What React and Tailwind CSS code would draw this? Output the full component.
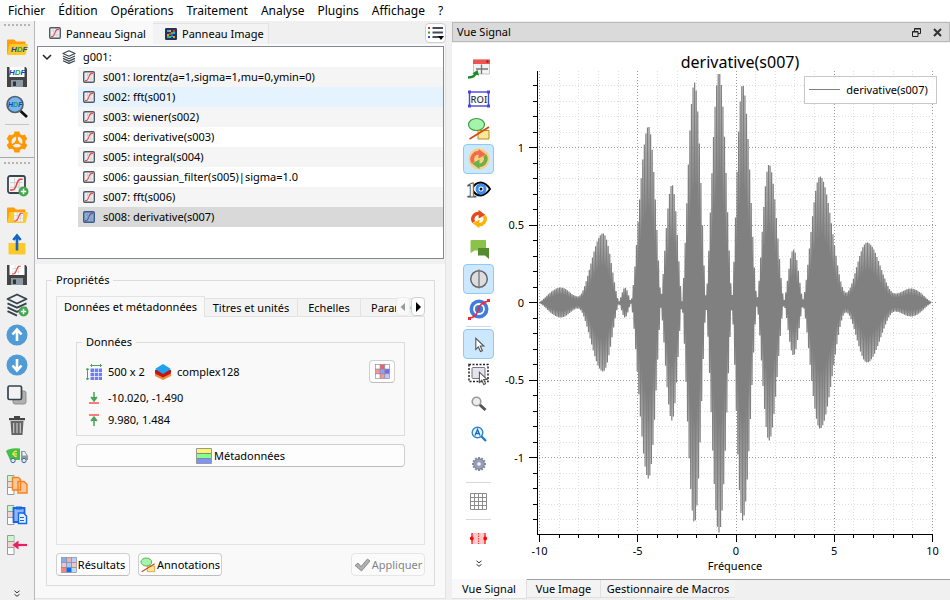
import React from "react";

/* ---------- small building blocks ---------- */

const Svg = ({ size = 24, children, box = 24, className = "" }) => (
  <svg width={size} height={size} viewBox={`0 0 ${box} ${box}`} className={`shrink-0 ${className}`} aria-hidden="true">
    {children}
  </svg>
);

const HdfText = ({ x = 5, y = 15, size = 8 }) => (
  <text x={x} y={y} fontSize={size} fontWeight="700" fontStyle="italic" fontFamily="Liberation Sans, sans-serif">
    <tspan fill="#1d3fae">H</tspan>
    <tspan fill="#18a05a">D</tspan>
    <tspan fill="#1d3fae">F</tspan>
  </text>
);

const SignalIcon = ({ size = 12, selected = false, className = "" }) => (
  <Svg size={size} box={12} className={className}>
    <rect x="0.7" y="0.7" width="10.6" height="10.6" rx="1.2" fill={selected ? "#8fb2d8" : "#eef0f2"} stroke={selected ? "#3b5a86" : "#4d5b66"} strokeWidth="1.4" />
    <path d="M4.5 1.5v9M8 1.5v9M1.5 4h9M1.5 8h9" stroke={selected ? "#7398c4" : "#c6cbd0"} strokeWidth="0.6" />
    <path d="M2 9.6h1.6C6 9.4 5.6 2.6 8.4 2.4H10" fill="none" stroke={selected ? "#7c4f86" : "#f04a4a"} strokeWidth="1.1" />
  </Svg>
);

const ImageIcon = () => (
  <Svg size={12} box={12}>
    <rect width="12" height="12" rx="1.2" fill="#22345a" />
    <path d="M2 2h2v2H2zM8 4h2v2H8zM4 8h2v2H4z" fill="#25b6e8" />
    <path d="M4 2h2v2H4zM2 6h2v2H2zM8 8h2v2H8z" fill="#f0a020" />
    <path d="M8 2h2v2H8zM4 5h2v2H4z" fill="#e03c31" />
    <path d="M6 4h2v2H6zM2 8h2v2H2zM6 8h2v1H6z" fill="#3fb54a" />
    <path d="M6 6h2v2H6z" fill="#2b64d8" />
  </Svg>
);

const Layers = ({ size = 14 }) => (
  <Svg size={size} box={14}>
    <g fill="none" stroke="#36454f" strokeWidth="1.2" strokeLinejoin="round">
      <path d="M7 .8 13 3.5 7 6.2 1 3.5z" />
      <path d="m1 6 6 2.7L13 6M1 8.4l6 2.7 6-2.7M1 10.8l6 2.6 6-2.6" />
    </g>
  </Svg>
);

const Folder = ({ children }) => (
  <Svg>
    <path d="M2 5.500q0-1 1-1h6l2 2h8.500q1 0 1 1V19H2z" fill="#ff9d0b" />
    <path d="M2 20 4.600 9H23l-2 9.600q-.3 1.400-1.600 1.400z" fill="#ffca28" />
    {children}
  </Svg>
);

const Floppy = ({ children }) => (
  <Svg>
    <path d="M2 2h18.500L22 3.500V22H2z" fill="#444" />
    <path d="M4.500 2h15v10h-15z" fill="#fff" />
    <path d="M6 15h12v7H6z" fill="#8d9aa3" />
    <path d="M8 16.500h3V21H8z" fill="#333" />
    {children}
  </Svg>
);

const PlusBadge = () => (
  <g>
    <circle cx="18.500" cy="18.500" r="5" fill="#43a84b" />
    <path d="M18.500 15.800v5.400M15.800 18.500h5.400" stroke="#fff" strokeWidth="1.500" />
  </g>
);

const Curve = ({ t }) => (
  <g transform={t}>
    <path d="M0 4h11M0 8h11M4 0v11M8 0v11" stroke="#c4c9ce" strokeWidth=".7" />
    <path d="M0 10.500h2C6.500 10 5 1.500 9 1h2" fill="none" stroke="#ef3e3e" strokeWidth="1.300" />
  </g>
);

const Shapes = ({ size = 24 }) => (
  <Svg size={size}>
    <ellipse cx="9.500" cy="7.500" rx="8" ry="6" fill="#a4f5ab" stroke="#3f9a43" strokeWidth="1.200" />
    <path d="M11 13.500h11V22H11z" fill="#fde79a" stroke="#b98d1e" strokeWidth="1" />
    <path d="M2.500 22 22 10" stroke="#cf4d17" strokeWidth="1.700" />
  </Svg>
);

const MetaBase = ({ children }) => (
  <Svg>
    <path d="M2.500 2.500H9v19H2.500z" fill="#fff" stroke="#9a9a9a" />
    <path d="M3 3h5.500v5H3z" fill="#c9f7c9" />
    <path d="M3 9h5.500v5H3z" fill="#f4d3d3" />
    <path d="M2.500 8.500H9M2.500 14.500H9" stroke="#9a9a9a" />
    {children}
  </Svg>
);

const Grid3 = ({ size = 16, colors }) => (
  <Svg size={size} box={16}>
    {colors.map((c, i) => (
      <rect key={i} x={0.5 + (i % 3) * 5} y={0.5 + Math.floor(i / 3) * 5} width="5" height="5" fill={c} stroke="#8c8c9c" strokeWidth=".7" />
    ))}
  </Svg>
);

const DoubleChevron = () => (
  <Svg size={8} box={8}>
    <path d="m1.500 .8 2.500 2 2.500-2M1.500 4.300l2.500 2 2.500-2" fill="none" stroke="#333" strokeWidth="1" />
  </Svg>
);

const Dots = () => (
  <div className="flex h-[11px] shrink-0 items-center px-1 pb-1">
    <div className="h-0.5 w-full border-t-2 border-dotted border-[#b4b4b4]" />
  </div>
);

const ToolButton = ({ label, children }) => (
  <button type="button" aria-label={label} title={label} className="flex h-[30px] w-full shrink-0 items-center justify-center">
    {children}
  </button>
);

/* ---------- left tool bar ---------- */

const ArrowDisc = ({ down }) => (
  <Svg>
    <circle cx="12" cy="12" r="10.500" fill="#4f9bd5" />
    <g transform={down ? "rotate(180 12 12)" : undefined}>
      <path d="M12 18V8M7.500 11.500 12 6.500l4.500 5" fill="none" stroke="#fff" strokeWidth="2.600" />
    </g>
  </Svg>
);

const gearTeeth = [0, 60, 120, 180, 240, 300];

function LeftToolbar() {
  return (
    <div role="toolbar" className="flex w-[35px] shrink-0 flex-col overflow-hidden border-r border-[#b8b8b8] bg-[#f0f0f0]">
      <Dots />
      <ToolButton label="Ouvrir HDF5"><Folder><HdfText x={6} y={17} /></Folder></ToolButton>
      <ToolButton label="Enregistrer HDF5"><Floppy><HdfText x={4} y={10} /></Floppy></ToolButton>
      <ToolButton label="Parcourir HDF5">
        <Svg>
          <path d="m15.500 16 6.500 6" stroke="#111" strokeWidth="2.800" />
          <circle cx="10" cy="9.500" r="8" fill="#74b7f2" stroke="#555f66" strokeWidth="1.600" />
          <HdfText x={3} y={12} size={7} />
        </Svg>
      </ToolButton>
      <div className="mx-[5px] my-0.5 h-px shrink-0 bg-[#c6c6c6]" />
      <ToolButton label="Préférences">
        <Svg>
          {gearTeeth.map((a) => (
            <path key={a} d="M8.500 6 9.500 1.500h5L15.500 6z" fill="#ff9800" transform={`rotate(${a} 12 12)`} />
          ))}
          <circle cx="12" cy="12" r="7" fill="none" stroke="#ff9800" strokeWidth="3" />
          <path d="M12 12V6M12 12l5 3M12 12l-5 3" stroke="#ff9800" strokeWidth="1.800" />
          <circle cx="12" cy="12" r="2" fill="#ff9800" />
        </Svg>
      </ToolButton>
      <div className="mb-px h-px shrink-0 bg-[#a8a8a8]" />
      <Dots />
      <ToolButton label="Nouveau signal">
        <Svg>
          <rect x="3" y="3" width="17" height="17" rx="2" fill="#f4f4f4" stroke="#35464f" strokeWidth="1.800" />
          <Curve t="translate(5 5) scale(1.150)" />
          <PlusBadge />
        </Svg>
      </ToolButton>
      <ToolButton label="Ouvrir">
        <Folder>
          <path d="M9 9.500h9v9H9z" fill="#f3f3f3" />
          <Curve t="translate(9 9.500) scale(.8)" />
        </Folder>
      </ToolButton>
      <ToolButton label="Exporter">
        <Svg>
          <path d="M3.500 10h17v10.500q0 1-1 1h-15q-1 0-1-1z" fill="#ffca28" />
          <path d="M12 17.500V4M8.300 7 12 2.500 15.700 7" fill="none" stroke="#1565c0" strokeWidth="2.600" />
        </Svg>
      </ToolButton>
      <ToolButton label="Enregistrer"><Floppy><Curve t="translate(7 2.500) scale(.8)" /></Floppy></ToolButton>
      <ToolButton label="Nouveau groupe">
        <Svg>
          <g fill="none" stroke="#33444e" strokeWidth="1.900" strokeLinejoin="round">
            <path d="M12 1.500 21.500 6 12 10.500 2.500 6z" />
            <path d="m2.500 10.300 9.500 4.400 9.500-4.400M2.500 14.400l9.500 4.400 9.500-4.400M2.500 18.200l9.500 4.400" />
          </g>
          <PlusBadge />
        </Svg>
      </ToolButton>
      <ToolButton label="Monter"><ArrowDisc /></ToolButton>
      <ToolButton label="Descendre"><ArrowDisc down /></ToolButton>
      <ToolButton label="Dupliquer">
        <Svg>
          <rect x="8" y="8" width="13" height="13" rx="2" fill="#b0b0b0" stroke="#8f8f8f" />
          <rect x="3" y="3" width="13.500" height="13.500" rx="1.500" fill="#f2f2f2" stroke="#33444e" strokeWidth="1.700" />
        </Svg>
      </ToolButton>
      <ToolButton label="Supprimer">
        <Svg>
          <path d="M5.500 8h13l-1 14h-11z" fill="#666" />
          <path d="M8.700 10v10M12 10v10M15.300 10v10" stroke="#c8c8c8" strokeWidth="1.200" />
          <path d="M4 5h16v2.200H4zM9 3h6v2H9z" fill="#454545" />
        </Svg>
      </ToolButton>
      <ToolButton label="Tout supprimer">
        <Svg>
          <path d="M1 8q4-3.500 14-2.500V17H5z" fill="#43c04a" />
          <path d="M16 8h4l3 5v4h-7z" fill="#8f9a9f" />
          <path d="M17.500 9h2l2 3.500h-4z" fill="#e9f3fa" />
          <path d="M12 8.500a2.500 2.500 0 1 0 0 4.500M7 11h5" fill="none" stroke="#f3e04b" strokeWidth="1.300" />
          <circle cx="8" cy="17.500" r="2.200" fill="#dfe8f2" stroke="#3c67a8" />
          <circle cx="19" cy="17.500" r="2.200" fill="#dfe8f2" stroke="#3c67a8" />
        </Svg>
      </ToolButton>
      <ToolButton label="Copier les métadonnées">
        <MetaBase>
          <path d="M7.500 4.500h6l2 2V17h-8zM13 8.500h6l3 3V20h-9z" fill="#ffc79b" stroke="#f5821f" strokeWidth="1.400" />
        </MetaBase>
      </ToolButton>
      <ToolButton label="Coller les métadonnées">
        <MetaBase>
          <path d="M8.500 5h11v14h-11z" fill="#8db7f2" stroke="#1565e6" strokeWidth="1.800" />
          <path d="M11 3.500h6v3h-6z" fill="#1565e6" />
          <path d="M13.500 10h5l3 3v7.500h-8z" fill="#e4efff" stroke="#1565e6" strokeWidth="1.400" />
          <path d="M15 14.500h4M15 17.500h4" stroke="#1565e6" />
        </MetaBase>
      </ToolButton>
      <ToolButton label="Importer les métadonnées">
        <MetaBase>
          <path d="M22 12H12" stroke="#e91e63" strokeWidth="2.200" />
          <path d="M13.500 7.500v9L7.500 12z" fill="#e91e63" />
        </MetaBase>
      </ToolButton>
      <div className="mt-auto flex justify-center pb-0.5"><DoubleChevron /></div>
    </div>
  );
}

/* ---------- signal panel ---------- */

const signals = [
  "s001: lorentz(a=1,sigma=1,mu=0,ymin=0)",
  "s002: fft(s001)",
  "s003: wiener(s002)",
  "s004: derivative(s003)",
  "s005: integral(s004)",
  "s006: gaussian_filter(s005)|sigma=1.0",
  "s007: fft(s006)",
  "s008: derivative(s007)",
];

const rowColor = (i) => {
  if (i === 1) return "bg-[#e5f3ff]";
  if (i === 7) return "bg-[#d9d9d9]";
  return i % 2 === 0 ? "bg-[#f5f5f5]" : "bg-white";
};

function SignalTree() {
  return (
    <ul role="tree" className="ml-0.5 mt-0.5 mr-px h-[213px] shrink-0 border border-[#828790] bg-white">
      <li role="treeitem" aria-expanded="true" aria-selected="false">
        <div className="flex h-5 items-center pl-1">
          <Svg size={10} box={10}>
            <path d="m1 3 4 4 4-4" fill="none" stroke="#222" strokeWidth="1.500" />
          </Svg>
          <span className="ml-2.5 mr-[7px]"><Layers /></span>
          g001:
        </div>
        <ul role="group" className="ml-10">
          {signals.map((s, i) => (
            <li key={s} role="treeitem" aria-selected={i === 7} className={`flex h-5 items-center gap-2 pl-[5px] ${rowColor(i)}`}>
              <SignalIcon selected={i === 7} />
              {s}
            </li>
          ))}
        </ul>
      </li>
    </ul>
  );
}

const button = "flex h-[23px] items-center rounded border border-[#cfcfcf] border-b-[#bcbcbc] bg-[#fdfdfd]";
const idleTab = "mt-0.5 flex shrink-0 items-center border-r border-t border-[#e3e3e3] bg-[#f3f3f3]";

function Properties() {
  return (
    <fieldset className="ml-[11px] mr-[10px] flex min-w-0 flex-1 flex-col border border-[#dcdcdc] px-[9px] pb-[9px]">
      <legend className="-ml-1 h-[18px] px-1 leading-[18px]">Propriétés</legend>
      <div role="tablist" className="relative mt-[7px] flex h-[21px] shrink-0">
        <button type="button" role="tab" aria-selected="true" className="z-10 flex w-[149px] shrink-0 items-center justify-center border border-b-0 border-[#e3e3e3] bg-[#f9f9f9]">
          Données et métadonnées
        </button>
        <div className="flex min-w-0 flex-1 overflow-hidden border-b border-[#e3e3e3]">
          <button type="button" role="tab" aria-selected="false" className={`${idleTab} w-[93px] justify-center`}>Titres et unités</button>
          <button type="button" role="tab" aria-selected="false" className={`${idleTab} w-[63px] justify-center`}>Echelles</button>
          <button type="button" role="tab" aria-selected="false" className={`${idleTab} pl-2.5`}>Paramètres</button>
        </div>
        <div className="absolute right-0 top-px z-10 flex gap-px">
          <button type="button" disabled aria-label="Onglets précédents" className="flex h-[19px] w-[14px] items-center justify-center rounded border border-[#ececec] bg-[#f9f9f9]">
            <Svg size={8} box={8}><path d="M6 0v8L1.500 4z" fill="#9a9a9a" /></Svg>
          </button>
          <button type="button" aria-label="Onglets suivants" className="flex h-[19px] w-[14px] items-center justify-center rounded border border-[#cfcfcf] bg-white">
            <Svg size={10} box={10}><path d="M3 0v10l5-5z" fill="#000" /></Svg>
          </button>
        </div>
      </div>
      <div role="tabpanel" className="flex flex-1 flex-col border border-t-0 border-[#e3e3e3] px-[19px] pt-4">
        <fieldset className="border border-[#dcdcdc] pb-[5px] pl-[9px] pr-[9px]">
          <legend className="-ml-1 h-[18px] px-1 leading-[18px]">Données</legend>
          <div className="mt-2 flex h-[25px] items-center">
            <Svg size={16} box={16}>
              <path d="M4.500 4.500H8V8H4.500zM8.700 4.500h3.300V8H8.700zM12.700 4.500H16V8h-3.300zM4.500 8.700H8V12H4.500zM8.700 8.700h3.300V12H8.700zM12.700 8.700H16V12h-3.300zM4.500 12.700H8V16H4.500zM8.700 12.700h3.300V16H8.700zM12.700 12.700H16V16h-3.300z" fill="#6f7cf7" />
              <path d="M1.500 5v11M5 1.500h11M0 6l1.500-2L3 6M0 14l1.500 2L3 14M6 0 4.500 1.500 6 3M14 0l1.500 1.500L14 3" fill="none" stroke="#4aa45a" />
            </Svg>
            <span className="ml-1.5 w-[47px]">500 x 2</span>
            <Svg size={16} box={16}>
              <path d="M0 10v2l8 4 8-4v-2z" fill="#f08c2e" />
              <path d="M0 6v3.500l8 4 8-4V6z" fill="#c2141b" />
              <path d="M8 0 16 5 8 10 0 5z" fill="#1ea1ef" />
            </Svg>
            <span className="ml-1.5">complex128</span>
            <button type="button" aria-label="Afficher le tableau" className={`${button} ml-auto w-[26px] justify-center`}>
              <Grid3 size={15} colors={["#fff", "#ff5a5a", "#fff", "#ff9393", "#9a9aff", "#6b6bff", "#fff", "#ff9393", "#c6c6ff"]} />
            </button>
          </div>
          <div className="mt-0.5 flex h-[24px] items-center">
            <Svg size={16} box={16}>
              <path d="M8 2v8M5 7l3 4 3-4" fill="#4aa45a" stroke="#4aa45a" strokeWidth="1.500" />
              <path d="M3 13h10" stroke="#ff7b7b" strokeWidth="2" />
            </Svg>
            <span className="ml-1.5">-10.020, -1.490</span>
          </div>
          <div className="flex h-5 items-center">
            <Svg size={16} box={16}>
              <path d="M8 14V6M5 9l3-4 3 4" fill="#4aa45a" stroke="#4aa45a" strokeWidth="1.500" />
              <path d="M3 3h10" stroke="#ff7b7b" strokeWidth="2" />
            </Svg>
            <span className="ml-1.5">9.980, 1.484</span>
          </div>
        </fieldset>
        <button type="button" className={`${button} mt-2 justify-center gap-0.5`}>
          <Svg size={16} box={16}>
            <path d="M.5.5h15v15H.5z" fill="#7f93ff" stroke="#999" />
            <path d="M1 1h14v4.500H1z" fill="#fff566" />
            <path d="M1 6h14v4H1z" fill="#84ff93" />
            <path d="M1 5.500h14M1 10.500h14" stroke="#888" />
          </Svg>
          Métadonnées
        </button>
      </div>
      <div className="mt-2 flex gap-2">
        <button type="button" className={`${button} w-[74px] justify-center gap-px`}>
          <Grid3 colors={["#7badff", "#eab0b0", "#b4cfff", "#e7c6cc", "#abc9ff", "#f0c5c5", "#ff8080", "#0e6bff", "#b5e2f0"]} />
          Résultats
        </button>
        <button type="button" className={`${button} w-[84px] justify-center gap-px`}>
          <Shapes size={16} />
          Annotations
        </button>
        <button type="button" disabled className="ml-auto flex h-[23px] w-[74px] items-center justify-center gap-0.5 rounded border border-[#e6e6e6] bg-[#fbfbfb] text-[#858585]">
          <Svg size={16} box={16}>
            <path d="M1 8.500 4 6l3 3.500L13.500 2 16 4 7.500 14z" fill="#b0b0b0" stroke="#7d7d7d" strokeWidth=".8" />
          </Svg>
          Appliquer
        </button>
      </div>
    </fieldset>
  );
}

function SignalPanel() {
  return (
    <section className="flex w-[411px] shrink-0 flex-col">
      <div className="flex h-[23px] shrink-0">
        <div role="tablist" className="flex flex-1">
          <button type="button" role="tab" aria-selected="true" className="flex w-[118px] items-center gap-[5px] bg-[#f9f9f9] pl-3.5">
            <SignalIcon />
            <span className="pt-0.5">Panneau Signal</span>
          </button>
          <button type="button" role="tab" aria-selected="false" className="mt-0.5 flex w-[116px] items-center gap-[5px] border-r border-t border-[#e3e3e3] bg-[#f3f3f3] pl-3">
            <ImageIcon />
            Panneau Image
          </button>
        </div>
        <button type="button" aria-label="Affichage de la liste" className="mt-0.5 flex h-5 w-[21px] items-center justify-center rounded border border-[#cfcfcf] bg-white">
          <Svg size={16} box={16}>
            <path d="M4.500 3H15M4.500 7.500H15M4.500 12H12" stroke="#444c55" strokeWidth="2" />
            <path d="M0 2h2v2H0z" fill="#c0392b" />
            <path d="M0 6.500h2v2H0z" fill="#2e9e3f" />
            <path d="M0 11h2v2H0z" fill="#3049d8" />
            <path d="M10 11h6l-3 4z" fill="#000" />
          </Svg>
        </button>
      </div>
      <div className="mb-px flex flex-1 flex-col border-b border-r border-[#e3e3e3] bg-[#f9f9f9]">
        <SignalTree />
        <div className="mb-[7px] h-[5px] shrink-0 bg-[#f0f0f0]" />
        <Properties />
        <div className="h-3 shrink-0" />
      </div>
    </section>
  );
}

/* ---------- plot ---------- */

const px = (v) => 231 + 19.65 * v;
const py = (v) => 259.5 - 155 * v;

/* Envelope extrema: horizontal position, half height, sharpness of the rise next to it. */
const envelope = [
  [34, 0, 1.3], [56, 15, 0], [73, 6, 2], [98, 69, 0], [114, 1, 1.5], [120, 15, 0],
  [126, 1, 1.5], [143.500, 176, 0], [156, 4, 1.3], [167, 118, 0], [177, 1, 1.4], [189.500, 220, 0],
  [201, 4, 1.4], [214, 230, 0], [227, 4, 1.4], [237.500, 218, 0], [252, 3, 1.500], [264, 138, 0],
  [279, 2, 1.500], [288.500, 53, 0], [298, 3, 1.500], [315, 126, 0], [341, 10, 2], [362, 60, 0],
  [390, 9, 2], [406, 14, 0], [427, 0, 1.3],
];

function amplitude(x) {
  for (let i = 1; i < envelope.length; i++) {
    const a = envelope[i - 1];
    const b = envelope[i];
    if (x <= b[0]) {
      const [low, high] = a[1] < b[1] ? [a, b] : [b, a];
      const t = Math.abs(x - low[0]) / (b[0] - a[0]);
      return low[1] + (high[1] - low[1]) * Math.pow(Math.sin((t * Math.PI) / 2), low[2]);
    }
  }
  return 0;
}

const curve = Array.from({ length: 500 }, (_, i) => {
  const x = 34 + i * 0.786;
  const y = 259.5 + (i % 2 ? 1 : -1) * amplitude(x);
  return `${x.toFixed(2)},${y.toFixed(1)}`;
}).join(" ");

const xs = Array.from({ length: 21 }, (_, i) => i - 10);
const ys = Array.from({ length: 29 }, (_, i) => i - 14);

function Plot() {
  return (
    <svg viewBox="0 0 445 536" className="min-h-0 min-w-0 flex-1" role="img" aria-label="derivative(s007)" fontSize="11">
      <g shapeRendering="crispEdges" strokeDasharray="1 2">
        {xs.map((v) => (
          <line key={v} x1={Math.floor(px(v)) + 0.5} x2={Math.floor(px(v)) + 0.5} y1="28" y2="490" stroke={v % 5 ? "#dedede" : "#9a9a9a"} />
        ))}
        {ys.map((v) => (
          <line key={v} x1="34" x2="433" y1={Math.floor(py(v / 10)) + 0.5} y2={Math.floor(py(v / 10)) + 0.5} stroke={v % 5 ? "#dedede" : "#9a9a9a"} />
        ))}
      </g>
      <polyline points={curve} fill="none" stroke="#808080" strokeWidth="1.200" strokeLinejoin="bevel" />
      <g stroke="#000" shapeRendering="crispEdges">
        <line x1="32.5" x2="32.5" y1="28" y2="492" />
        <line x1="32" x2="428" y1="491.5" y2="491.5" />
        {xs.map((v) => (
          <line key={v} x1={Math.floor(px(v)) + 0.5} x2={Math.floor(px(v)) + 0.5} y1="491" y2={v % 5 ? 495 : 499} />
        ))}
        {ys.map((v) => (
          <line key={v} x1={v % 5 ? 28 : 24} x2="32" y1={Math.floor(py(v / 10)) + 0.5} y2={Math.floor(py(v / 10)) + 0.5} />
        ))}
      </g>
      {[1, 0.5, 0, -0.5, -1].map((v) => (
        <text key={v} x="19" y={py(v) + 4} textAnchor="end">{v}</text>
      ))}
      {[-10, -5, 0, 5, 10].map((v) => (
        <text key={v} x={px(v)} y="512" textAnchor="middle">{v}</text>
      ))}
      <text x="230" y="527" textAnchor="middle">Fréquence</text>
      <text x="235" y="25" textAnchor="middle" fontSize="16">derivative(s007)</text>
      <rect x="299.5" y="33.5" width="132" height="27" fill="#fff" fillOpacity=".9" stroke="#c8c8c8" />
      <line x1="304" x2="335" y1="46.5" y2="46.5" stroke="#808080" />
      <text x="382" y="51" textAnchor="middle">derivative(s007)</text>
    </svg>
  );
}

/* ---------- plot tool bar ---------- */

const PlotTool = ({ label, active = false, children }) => (
  <button
    type="button"
    aria-label={label}
    title={label}
    aria-pressed={active}
    className={`flex h-[30px] w-[31px] shrink-0 items-center justify-center rounded-sm border ${active ? "border-[#90c8f6] bg-[#cce8ff]" : "border-transparent"}`}
  >
    {children}
  </button>
);

const Cycle = ({ a, b }) => (
  <g fill="none" strokeWidth="3.600">
    <path d="M6.200 15.500A6.300 6.300 0 0 1 13 6" stroke={a} />
    <path d="m11.500 2 7.500 5.500-7.500 4z" fill={a} />
    <path d="M17.800 8.500A6.300 6.300 0 0 1 11 18" stroke={b} />
    <path d="M12.500 22 5 16.500l7.500-4z" fill={b} />
  </g>
);

const Cursor = ({ x = 0, y = 0, s = 0.85 }) => (
  <path transform={`translate(${x} ${y}) scale(${s})`} d="M8 4v13l3-3 2.500 5.500 2.300-1L13.300 13H17.500z" fill="#fff" stroke="#555" strokeWidth="1.300" />
);

const smallTeeth = Array.from({ length: 12 }, (_, i) => i * 30);

function PlotToolbar() {
  return (
    <div role="toolbar" className="ml-[11px] flex w-[31px] shrink-0 flex-col pt-[11px]">
      <PlotTool label="Afficher dans une fenêtre">
        <Svg>
          <path d="M6.500 3h16v14h-16z" fill="#f3f3f3" stroke="#c8c8c8" />
          <path d="M6 2.500h17v4.500H6z" fill="#ef5350" />
          <path d="M19.500 3.500h2v2h-2z" fill="#8b1a1a" />
          <path d="M14.500 7.500V17M9 12h12" stroke="#777" strokeWidth="1.300" />
          <path d="M1 20.500q7 0 8-5" fill="none" stroke="#168a24" strokeWidth="2.400" />
          <path d="m5.500 16.500 5-3.500 1.500 5.500z" fill="#168a24" />
        </Svg>
      </PlotTool>
      <PlotTool label="Région d'intérêt">
        <Svg>
          <rect x="2.500" y="5" width="19" height="14" fill="#fff" stroke="#4a45dd" strokeWidth="1.400" />
          <path d="M1 3.500h3v3H1zM20 3.500h3v3h-3zM1 17.500h3v3H1zM20 17.500h3v3h-3z" fill="#4a45dd" />
          <text x="12" y="15.500" fontSize="9.500" textAnchor="middle" fontWeight="500" fill="#333">ROI</text>
        </Svg>
      </PlotTool>
      <PlotTool label="Annotations"><Shapes /></PlotTool>
      <PlotTool label="Rafraîchissement automatique" active>
        <Svg><circle cx="12" cy="12" r="10.500" fill="#ffce7a" /><Cycle a="#ee6a50" b="#6ab04c" /></Svg>
      </PlotTool>
      <PlotTool label="Afficher le premier seulement">
        <Svg>
          <path d="M5 12q3-6.500 9-6.500 5 .5 9 6.500-4 6-9 6.500-6 0-9-6.500z" fill="#fff" stroke="#050505" strokeWidth="2" />
          <circle cx="14" cy="12" r="4" fill="#fff" stroke="#3a8bf0" strokeWidth="3" />
          <circle cx="14" cy="12" r="1.500" fill="#111" />
          <text x="-1" y="20" fontSize="22" fontWeight="700" fontFamily="Liberation Serif, serif" fill="#fff" stroke="#555" strokeWidth=".9">1</text>
        </Svg>
      </PlotTool>
      <PlotTool label="Rafraîchir"><Svg size={22}><Cycle a="#e64a19" b="#ffb300" /></Svg></PlotTool>
      <PlotTool label="Étiquettes graphiques">
        <Svg>
          <path d="M4.500 3h13.500q1 0 1 1v9.500H7.500L3.500 16V4q0-1 1-1z" fill="#8bc34a" />
          <path d="M11 11h11v11l-4-3.500h-7z" fill="#558b2f" />
        </Svg>
      </PlotTool>
      <PlotTool label="Contraste" active>
        <Svg>
          <circle cx="12" cy="12" r="8.300" fill="#ddd" stroke="#666" strokeWidth="1.500" />
          <path d="M12 2.500v19" stroke="#777" strokeWidth="1.300" />
        </Svg>
      </PlotTool>
      <PlotTool label="Sous-échantillonnage">
        <Svg>
          <circle cx="12" cy="12" r="9.500" fill="#3f7de0" />
          <circle cx="12" cy="12" r="5" fill="none" stroke="#fff" strokeWidth="1.800" />
          <path d="M2 21q7 0 9-8t11-9" fill="none" stroke="#ee2a3a" strokeWidth="1.500" />
          <path d="M1 20h3v3H1zM6 17.500h2.500V20H6zM10.500 11H13v2.500h-2.500zM15 5h2.500v2.500H15zM20 2h3v3h-3z" fill="#ee2a3a" />
        </Svg>
      </PlotTool>
      <div className="mx-[3px] my-0.5 h-px shrink-0 bg-[#d8d8d8]" />
      <PlotTool label="Sélection" active><Svg><Cursor x={2} y={3} /></Svg></PlotTool>
      <PlotTool label="Zoom rectangle">
        <Svg>
          <rect x="2" y="2.500" width="19" height="17" fill="none" stroke="#222" strokeWidth="1.500" strokeDasharray="2 1.500" />
          <rect x="5" y="5.500" width="13" height="11" rx="1" fill="#e4e4ea" stroke="#77778a" />
          <Cursor x={6} y={7} s={0.8} />
        </Svg>
      </PlotTool>
      <PlotTool label="Zoom">
        <Svg size={16} box={16}>
          <path d="m8.500 8.500 6 5.500" stroke="#555" strokeWidth="3" />
          <circle cx="5.500" cy="5.500" r="4.300" fill="#eee" stroke="#999" strokeWidth="1.600" />
        </Svg>
      </PlotTool>
      <PlotTool label="Échelle automatique">
        <Svg size={16} box={16}>
          <path d="m9.500 9.500 5.500 5.500" stroke="#2b7bc4" strokeWidth="2.400" />
          <circle cx="6.500" cy="6.500" r="5.300" fill="#eaf6ff" stroke="#2b86d0" strokeWidth="1.400" />
          <path d="M4 9.500 6.500 3.500 9 9.500M5 7.500h3" fill="none" stroke="#1c69b5" strokeWidth="1.300" />
        </Svg>
      </PlotTool>
      <PlotTool label="Paramètres">
        <Svg size={16} box={16}>
          {smallTeeth.map((a) => (
            <path key={a} d="M7 1h2v3H7z" fill="#868aa6" transform={`rotate(${a} 8 8)`} />
          ))}
          <circle cx="8" cy="8" r="5.300" fill="#9a9eb8" stroke="#7c809c" />
          <circle cx="8" cy="8" r="1.800" fill="#f4f4f4" />
        </Svg>
      </PlotTool>
      <div className="mx-[3px] my-[3px] h-px shrink-0 bg-[#d8d8d8]" />
      <PlotTool label="Grille">
        <Svg size={17} box={17}>
          <path d="M.5.500h16v16H.5zM4.500.500v16M8.500.500v16M12.500.500v16M.500 4.500h16M.500 8.500h16M.500 12.500h16" fill="none" stroke="#8c8c8c" />
        </Svg>
      </PlotTool>
      <div className="mx-[3px] my-[3px] h-px shrink-0 bg-[#d8d8d8]" />
      <PlotTool label="Plage horizontale">
        <Svg size={17} box={17}>
          <path d="M2 3h13v11H2z" fill="#ffcaca" />
          <path d="M2 3v11M15 3v11" stroke="#f00" strokeWidth="1.200" />
          <path d="M8.500 3v11" stroke="#f33" strokeDasharray="1.500 1" />
          <circle cx="1.800" cy="8.500" r="1.900" fill="#f00" />
          <circle cx="15.200" cy="8.500" r="1.900" fill="#f00" />
        </Svg>
      </PlotTool>
      <div className="mt-[7px] flex justify-center"><DoubleChevron /></div>
    </div>
  );
}

/* ---------- view dock ---------- */

function ViewDock() {
  return (
    <section className="ml-[6px] flex min-w-0 flex-1 flex-col">
      <header className="mt-px flex h-5 shrink-0 items-center border border-[#b9b9b9] bg-[#dadada] pl-1 pr-[7px]">
        <h1 className="flex-1">Vue Signal</h1>
        <button type="button" aria-label="Détacher" className="mr-3">
          <Svg size={9} box={9}>
            <path d="M2.500 3V.5h6v5H6M.500 3.500H6v5H.500zM2.500 1h6M.500 4H6" fill="none" stroke="#222" />
          </Svg>
        </button>
        <button type="button" aria-label="Fermer">
          <Svg size={9} box={9}><path d="m1 1 7 7M8 1 1 8" stroke="#333" strokeWidth="2" /></Svg>
        </button>
      </header>
      <div className="mt-px flex min-h-0 flex-1 bg-white">
        <PlotToolbar />
        <div className="ml-[11px] flex min-w-0 flex-1"><Plot /></div>
      </div>
      <div role="tablist" className="flex h-[21px] shrink-0">
        <button type="button" role="tab" aria-selected="true" className="mb-px w-[75px] border-b border-r border-[#e0e0e0] bg-[#f9f9f9]">Vue Signal</button>
        <div className="flex flex-1 border-t border-[#a0a0a0]">
          <button type="button" role="tab" aria-selected="false" className="mb-0.5 w-[74px] border-b border-r border-[#e0e0e0] bg-[#f3f3f3]">Vue Image</button>
          <button type="button" role="tab" aria-selected="false" className="mb-0.5 w-[134px] border-b border-[#e0e0e0] bg-[#f3f3f3]">Gestionnaire de Macros</button>
        </div>
      </div>
    </section>
  );
}

const menus = ["Fichier", "Édition", "Opérations", "Traitement", "Analyse", "Plugins", "Affichage", "?"];

export default function App() {
  return (
    <div className="flex h-screen flex-col overflow-hidden bg-[#f0f0f0] font-['Noto_Sans','Open_Sans',sans-serif] text-[11px] leading-4 text-black">
      <nav className="flex h-[21px] shrink-0 items-center gap-[13px] bg-white pl-2 text-xs">
        {menus.map((m) => (
          <button key={m} type="button">{m}</button>
        ))}
      </nav>
      <main className="flex min-h-0 flex-1">
        <LeftToolbar />
        <SignalPanel />
        <ViewDock />
      </main>
    </div>
  );
}
